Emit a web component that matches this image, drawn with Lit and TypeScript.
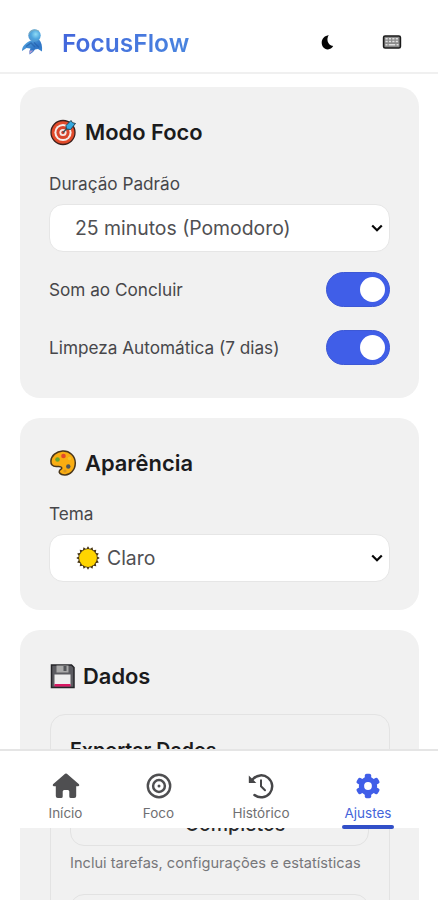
import { LitElement, html, css, svg } from "lit";
import { customElement, property } from "lit/decorators.js";

const logo = html`<svg width="24" height="32" viewBox="0 0 24 32">
  <defs>
    <radialGradient id="head" cx=".6" cy=".4" r=".65"><stop offset="0" stop-color="#8fdcf5"/><stop offset=".6" stop-color="#4da4de"/><stop offset="1" stop-color="#5296d0"/></radialGradient>
    <linearGradient id="body" x1="0" y1="0" x2="1" y2="1"><stop offset="0" stop-color="#62b6e8"/><stop offset=".6" stop-color="#2f75c6"/><stop offset="1" stop-color="#3f8bd4"/></linearGradient>
  </defs>
  <path d="M1 25C1 20 5 16.500 10 14.500L18 13.500C20.500 16 21.500 20 21 25.500L17 23L14 23.500L12 26L8.500 28.500L8.500 25L9.500 22.500L5.500 22Z" fill="url(#body)"/>
  <path d="M8.500 28L8.500 24.500L12.500 24.500Z" fill="#b09bd2"/>
  <path d="M5 20.500L10 17L14 21M13 16.500L18 21.500" stroke="#225da9" stroke-width="1.500" fill="none" opacity=".65"/>
  <circle cx="13.500" cy="9.500" r="6.200" fill="url(#head)"/>
  <path d="M8 8Q11 2 18 5" stroke="#8caeb5" stroke-width="1.200" fill="none" opacity=".7"/>
</svg>`;

const moon = html`<svg width="13" height="15" viewBox="0 0 13 15"><path d="M7.800 .3C5.200 3.400 6.100 10.300 12.200 11.100C10.800 13.500 8.900 14.500 6.700 14.400C2.900 14.200 .6 11.200 .7 7.500C.8 3.700 3.900 .5 7.800 .3Z" fill="#050505"/></svg>`;

const keyboard = html`<svg width="20" height="14" viewBox="0 0 20 14">
  <rect x="1.600" y="1" width="16.800" height="12" rx="1.600" fill="#8a8a8a" stroke="#1a1a1a" stroke-width="1.600"/>
  <path d="M3.500 3.800H16.500M3.500 6.500H16.500" stroke="#e0e0e0" stroke-width="1.500" stroke-dasharray="2.200 1.200"/>
  <path d="M3.500 9.700H5.500M6.700 9.700H13.300M14.500 9.700H16.500" stroke="#e0e0e0" stroke-width="1.400"/>
</svg>`;

const target = html`<svg width="28" height="28" viewBox="0 0 28 28">
  <circle cx="14" cy="14.500" r="12" fill="#e24b2b" stroke="#3b201c" stroke-width="1.300"/>
  <circle cx="14" cy="14.500" r="8.600" fill="#f5ece9"/>
  <circle cx="14" cy="14.500" r="6.600" fill="#d9452b"/>
  <circle cx="14" cy="14.500" r="3.600" fill="#f4e9e6"/>
  <circle cx="14" cy="14.500" r="1.700" fill="#d43e2a"/>
  <path d="M14 14.500L20 8.500" stroke="#31515f" stroke-width="1.500"/>
  <path d="M17 7.500L22 2.500L23.500 4.700L26.500 5.500L21.500 11.500L17.300 11Z" fill="#36a9df" stroke="#274451" stroke-width="1"/>
</svg>`;

const palette = html`<svg width="28" height="28" viewBox="0 0 28 28">
  <path d="M13.500 2C20.500 1.500 26.300 7 26.300 14C26.300 21 21 26.500 15.500 26C11 25.700 9.500 23.500 10.500 21.500C11.200 20 13.200 20.500 12.700 18.600C12.200 16.800 9.500 17.500 7.200 17.500C3.500 17.500 1.700 15.500 1.900 12C2.200 6.500 7.500 2.400 13.500 2Z" fill="#f9ad12" stroke="#49361b" stroke-width="1.500"/>
  <circle cx="8.500" cy="10.500" r="2.300" fill="#67a52e"/><circle cx="14.500" cy="7" r="2.300" fill="#e2492b"/>
  <circle cx="20.500" cy="9.500" r="1.800" fill="#f5c226"/><circle cx="19.300" cy="17.500" r="2.200" fill="#4c555c"/><circle cx="16" cy="22" r="1.600" fill="#d89522"/>
</svg>`;

const floppy = html`<svg width="26" height="28" viewBox="0 0 26 28">
  <path d="M2.500 3H22.500L25 5.500V25.500H2.500Z" fill="#5c5c61" stroke="#252529" stroke-width="1.500"/>
  <rect x="7.500" y="3.500" width="12" height="7" fill="#aaa"/><rect x="14.500" y="4" width="3" height="5" fill="#55575b"/>
  <rect x="5.500" y="12.500" width="16" height="11" fill="#eee"/><rect x="5.500" y="22" width="16" height="2.500" fill="#d91762"/>
</svg>`;

const rays = Array.from({ length: 32 }, (_, i) => {
  const a = (i * Math.PI) / 16;
  const r = i % 2 ? 9.3 : 11.7;
  return `${(12 + r * Math.cos(a)).toFixed(2)},${(12 + r * Math.sin(a)).toFixed(2)}`;
}).join(" ");
const sun = html`<svg width="24" height="24" viewBox="0 0 24 24"><polygon points=${rays} fill="#493715"/><circle cx="12" cy="12" r="8.900" fill="#ffd500"/></svg>`;

const chevron = html`<svg width="12" height="9" viewBox="0 0 12 9"><path d="M1.200 1.500L6 6.300L10.800 1.500" fill="none" stroke="#080808" stroke-width="2.200"/></svg>`;

const home = html`<svg width="28" height="26" viewBox="0 0 28 26"><path d="M13.100 .8Q14 .1 14.900 .8L27 11.300Q27.900 12.600 26.300 13.300H24.200V23Q24.200 25 22.200 25H18.900Q17.300 25 17.300 23.400V18.500Q17.300 17 15.800 17H12.200Q10.700 17 10.700 18.500V23.400Q10.700 25 9.100 25H5.800Q3.800 25 3.800 23V13.300H1.700Q.1 12.600 1 11.300Z" fill="#4f4f51"/></svg>`;
const bullseye = html`<svg width="26" height="26" viewBox="0 0 26 26"><g fill="none" stroke="#4f4f51"><circle cx="13" cy="13" r="11.200" stroke-width="2.400"/><circle cx="13" cy="13" r="5.900" stroke-width="2.500"/></g><circle cx="13" cy="13" r="1.500" fill="#4f4f51"/></svg>`;
const history = html`<svg width="26" height="26" viewBox="0 0 26 26"><path d="M4.800 6.200A11 11 0 1 1 6.500 22.100" fill="none" stroke="#464648" stroke-width="2.500" stroke-linecap="round"/><path d="M.8 2.500V9.400Q.8 10 1.400 10H8.400Z" fill="#464648"/><path d="M13 7.300V13.300L17 17.200" fill="none" stroke="#464648" stroke-width="2" stroke-linecap="round"/></svg>`;
const gear = html`<svg width="26" height="26" viewBox="0 0 26 26">
  ${[0, 60, 120].map((d) => svg`<rect x="9.800" y=".8" width="6.400" height="24.400" rx="1.800" fill="#405ee8" transform="rotate(${d} 13 13)"/>`)}
  <circle cx="13" cy="13" r="6.700" fill="none" stroke="#405ee8" stroke-width="5"/><circle cx="13" cy="13" r="3.900" fill="#fff"/>
</svg>`;

@customElement("settings-card")
class SettingsCard extends LitElement {
  @property() heading = "";
  @property({ attribute: false }) icon: unknown;
  static styles = css`
    :host { display: block; box-sizing: border-box; background: #f1f1f1; border-radius: 20px; padding: 31px 29px 0; }
    .title { display: flex; align-items: center; height: 28px; margin: 0; gap: 8px; font-size: 21.900px; font-weight: 580; color: #1b1b1d; white-space: nowrap; }
    svg { display: block; }
  `;
  render() {
    return html`<h2 class="title">${this.icon}<span>${this.heading}</span></h2><slot></slot>`;
  }
}

@customElement("toggle-switch")
class ToggleSwitch extends LitElement {
  static styles = css`
    :host { display: flex; justify-content: flex-end; align-items: center; box-sizing: border-box; width: 64px; height: 35px; padding: 0 4px; border-radius: 18px; background: #405ee8; border: 1px solid #3d58d5; }
    .knob { width: 25px; height: 25px; border-radius: 50%; background: #fff; }
  `;
  render() {
    return html`<span class="knob"></span>`;
  }
}

@customElement("app-root")
class AppRoot extends LitElement {
  static styles = css`
    :host { display: block; position: relative; width: 438px; height: 900px; overflow: hidden; background: #fff; font-family: Inter, "Liberation Sans", sans-serif; color: #47474a; }
    svg { display: block; }
    header { display: flex; align-items: center; box-sizing: border-box; height: 74px; padding: 12px 36px 0 21px; border-bottom: 2px solid #f0f0f0; }
    .brand { margin-left: 17px; padding-top: 2px; font-size: 24.500px; font-weight: 600; line-height: 30px; background: linear-gradient(120deg, #4265dc, #4a86df); -webkit-background-clip: text; background-clip: text; color: transparent; }
    .actions { display: flex; align-items: center; gap: 48px; margin-left: auto; }
    main { display: flex; flex-direction: column; gap: 20px; padding: 13px 19px 0 20px; }
    .focus { height: 311px; }
    .look { height: 192px; }
    .data { height: 330px; padding-top: 32px; }
    .label { font-size: 17.200px; line-height: 22px; white-space: nowrap; }
    .field { margin-top: 27px; }
    .look .field { margin-top: 26px; }
    .select { display: flex; align-items: center; box-sizing: border-box; width: 341px; height: 48px; margin-top: 9px; padding: 0 6px 0 25px; border: 1px solid #e6e6e6; border-radius: 14px; background: #fff; font-size: 19.400px; color: #505053; white-space: nowrap; }
    .select > svg { margin-left: auto; }
    .sun { margin: 0 7px 0 1px; }
    .row { display: flex; align-items: center; justify-content: space-between; width: 341px; height: 35px; margin-top: 20px; }
    .row + .row { margin-top: 23px; }
    .panel { box-sizing: border-box; width: 340px; height: 300px; margin: 24px 0 0 1px; padding: 24px 19px 0; border: 1px solid #e3e3e3; border-radius: 15px; }
    .subtitle { font-size: 19.600px; font-weight: 580; line-height: 22px; color: #1b1b1d; white-space: nowrap; }
    .button { display: flex; align-items: flex-end; justify-content: center; box-sizing: border-box; width: 299px; border: 1px solid #e2e2e2; border-radius: 14px; font-size: 19.500px; font-weight: 500; line-height: 24px; color: #29292b; }
    .export { height: 74px; margin-top: 11px; padding: 0 0 9px 31px; }
    .note { margin: 7px 0 21px; font-size: 14.600px; line-height: 20px; color: #77777a; white-space: nowrap; }
    .next { height: 50px; }
    nav { position: absolute; left: 0; right: 0; top: 749px; height: 79px; box-sizing: border-box; display: grid; grid-template-columns: 93px 93px 112px 102px; padding-left: 19px; background: #fff; border-top: 2px solid #e5e5e5; }
    .tab { display: flex; flex-direction: column; align-items: center; padding-top: 22px; font-size: 13.500px; color: #6f6f72; }
    .tab svg { height: 26px; }
    .tab span { margin-top: 6px; line-height: 17px; }
    .active { color: #4564da; }
    .active::after { content: ""; width: 52px; height: 4px; margin-top: 3px; border-radius: 2px; background: #314fc8; }
  `;
  render() {
    return html`
      <header>${logo}<span class="brand">FocusFlow</span><div class="actions">${moon}${keyboard}</div></header>
      <main>
        <settings-card class="focus" heading="Modo Foco" .icon=${target}>
          <div class="field"><div class="label">Duração Padrão</div><div class="select"><span>25 minutos (Pomodoro)</span>${chevron}</div></div>
          <div class="row"><span class="label">Som ao Concluir</span><toggle-switch></toggle-switch></div>
          <div class="row"><span class="label">Limpeza Automática (7 dias)</span><toggle-switch></toggle-switch></div>
        </settings-card>
        <settings-card class="look" heading="Aparência" .icon=${palette}>
          <div class="field"><div class="label">Tema</div><div class="select"><span class="sun">${sun}</span><span>Claro</span>${chevron}</div></div>
        </settings-card>
        <settings-card class="data" heading="Dados" .icon=${floppy}>
          <div class="panel">
            <div class="subtitle">Exportar Dados</div>
            <div class="button export">Completos</div>
            <div class="note">Inclui tarefas, configurações e estatísticas</div>
            <div class="button next"></div>
          </div>
        </settings-card>
      </main>
      <nav>
        <div class="tab">${home}<span>Início</span></div>
        <div class="tab">${bullseye}<span>Foco</span></div>
        <div class="tab">${history}<span>Histórico</span></div>
        <div class="tab active">${gear}<span>Ajustes</span></div>
      </nav>`;
  }
}
